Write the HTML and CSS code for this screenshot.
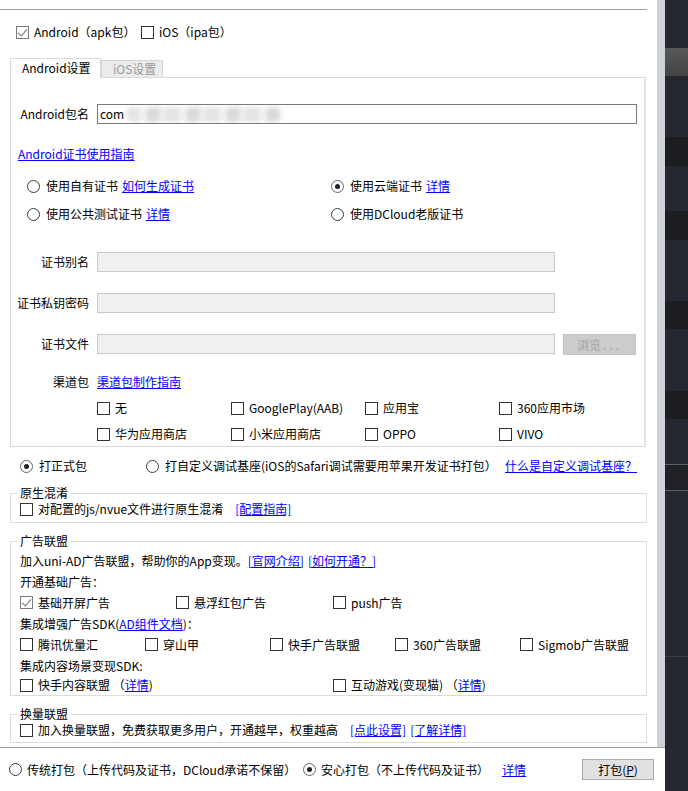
FILE: index.html
```html
<!DOCTYPE html>
<html lang="zh-CN">
  <head>
    <meta charset="UTF-8" />
    <title>发行 - 原生App-云打包</title>
    <link rel="stylesheet" href="styles.css">
  </head>
  <body>
    <div class="window">
      <div class="main">
        <div class="scroll">
          <div class="content">
            <div class="top-rule"></div>

            <!-- platforms -->
            <div class="platforms">
              <label class="opt"><span class="cb on"></span>Android（apk包）</label>
              <label class="opt"><span class="cb"></span>iOS（ipa包）</label>
            </div>

            <div class="tabs">
              <div class="tab active">Android设置</div>
              <div class="tab off">iOS设置</div>
            </div>

            <div class="panel">
              <div class="form-row">
                <span class="label">Android包名</span>
                <div class="input pkg">com<span class="blur"></span></div>
              </div>

              <a href="#" class="guide">Android证书使用指南</a>

              <div class="cert-grid">
                <label class="opt"><span class="rd"></span>使用自有证书<a href="#" class="link-after">如何生成证书</a></label>
                <label class="opt"><span class="rd on"></span>使用云端证书<a href="#" class="link-after">详情</a></label>
                <label class="opt"><span class="rd"></span>使用公共测试证书<a href="#" class="link-after">详情</a></label>
                <label class="opt"><span class="rd"></span>使用DCloud老版证书</label>
              </div>

              <div class="form-row cert first">
                <span class="label">证书别名</span>
                <div class="input"></div>
              </div>
              <div class="form-row cert">
                <span class="label">证书私钥密码</span>
                <div class="input"></div>
              </div>
              <div class="form-row cert">
                <span class="label">证书文件</span>
                <div class="input"></div>
                <div class="browse">浏览<span class="dots">...</span></div>
              </div>

              <div class="form-row channel">
                <span class="label">渠道包</span>
                <a href="#">渠道包制作指南</a>
              </div>
              <div class="channel-grid">
                <label class="opt"><span class="cb"></span>无</label>
                <label class="opt"><span class="cb"></span>GooglePlay(AAB)</label>
                <label class="opt"><span class="cb"></span>应用宝</label>
                <label class="opt"><span class="cb"></span>360应用市场</label>
                <label class="opt"><span class="cb"></span>华为应用商店</label>
                <label class="opt"><span class="cb"></span>小米应用商店</label>
                <label class="opt"><span class="cb"></span>OPPO</label>
                <label class="opt"><span class="cb"></span>VIVO</label>
              </div>
            </div>

            <div class="modes">
              <label class="opt release"><span class="rd on"></span>打正式包</label>
              <label class="opt debug"><span class="rd"></span>打自定义调试基座(iOS的Safari调试需要用苹果开发证书打包）</label>
              <a href="#">什么是自定义调试基座？</a>
            </div>

            <fieldset class="fs-mix">
              <legend>原生混淆</legend>
              <div class="row">
                <label class="opt"><span class="cb"></span>对配置的js/nvue文件进行原生混淆</label>
                <a href="#" class="bracket">[配置指南]</a>
              </div>
            </fieldset>

            <fieldset class="fs-ad">
              <legend>广告联盟</legend>
              <div class="ad-row">加入uni-AD广告联盟，帮助你的App变现。<a href="#">[官网介绍]</a><a href="#" class="next">[如何开通？]</a></div>
              <div class="ad-row">开通基础广告：</div>
              <div class="ad-row cols-base">
                <label class="opt"><span class="cb on"></span>基础开屏广告</label>
                <label class="opt"><span class="cb"></span>悬浮红包广告</label>
                <label class="opt"><span class="cb"></span>push广告</label>
              </div>
              <div class="ad-row">集成增强广告SDK(<a href="#">AD组件文档</a>)：</div>
              <div class="ad-row cols-sdk">
                <label class="opt"><span class="cb"></span>腾讯优量汇</label>
                <label class="opt"><span class="cb"></span>穿山甲</label>
                <label class="opt"><span class="cb"></span>快手广告联盟</label>
                <label class="opt"><span class="cb"></span>360广告联盟</label>
                <label class="opt"><span class="cb"></span>Sigmob广告联盟</label>
              </div>
              <div class="ad-row">集成内容场景变现SDK:</div>
              <div class="ad-row cols-content">
                <label class="opt"><span class="cb"></span>快手内容联盟 （<a href="#">详情</a>)</label>
                <label class="opt"><span class="cb"></span>互动游戏(变现猫) （<a href="#">详情</a>)</label>
              </div>
            </fieldset>

            <fieldset class="fs-swap">
              <legend>换量联盟</legend>
              <div class="row">
                <label class="opt"><span class="cb"></span>加入换量联盟，免费获取更多用户，开通越早，权重越高</label>
                <a href="#" class="bracket">[点此设置]</a><a href="#" class="next">[了解详情]</a>
              </div>
            </fieldset>
          </div>
          <div class="scrollbar"></div>
        </div>

        <!-- bottom bar -->
        <div class="footer">
          <label class="opt classic"><span class="rd"></span>传统打包（上传代码及证书，DCloud承诺不保留）</label>
          <label class="opt"><span class="rd on"></span>安心打包（不上传代码及证书）</label>
          <a href="#" class="footer-link">详情</a>
          <button class="pack-btn">打包(<u>P</u>)</button>
        </div>
      </div>
      <div class="side"></div>
    </div>
  </body>
</html>
```

FILE: styles.css
```css
* {
  box-sizing: border-box;
}

html,
body {
  margin: 0;
  padding: 0;
}

body {
  font-family: "Noto Sans CJK SC", "Noto Sans", sans-serif;
  font-size: 12px;
  line-height: 16px;
  color: #000;
  background: #fff;
}

a {
  color: #0000ff;
  text-decoration: underline;
}

.window {
  display: flex;
  width: 688px;
  height: 791px;
  overflow: hidden;
}

.main {
  width: 665px;
  display: flex;
  flex-direction: column;
}

.scroll {
  display: flex;
  height: 747px;
  overflow: hidden;
}

.content {
  width: 657px;
}

.scrollbar {
  width: 8px;
  background: #cdd1da;
}

.side {
  width: 23px;
  background: linear-gradient(
    to bottom,
    #252830 0 48px,
    #5a5858 48px,
    #444343 76px,
    #252830 76px 137px,
    #1c1d21 137px 166px,
    #252830 166px 211px,
    #1c1d21 211px 240px,
    #252830 240px 301px,
    #1c1d21 301px 329px,
    #252830 329px 391px,
    #1c1d21 391px 419px,
    #252830 419px 464px,
    #5b606b 464px 465px,
    #1f2126 465px 490px,
    #5b606b 490px 491px,
    #252830 491px 656px,
    #3a3e47 656px 657px,
    #252830 657px
  );
}

.top-rule {
  margin-top: 9px;
  width: 647px;
  border-top: 1px solid #a0a0a0;
}

/* checkbox / radio */
.opt {
  display: inline-flex;
  align-items: center;
  white-space: nowrap;
  height: 16px;
}

.cb {
  position: relative;
  flex: none;
  width: 13px;
  height: 13px;
  margin-right: 5px;
  border: 1px solid #333;
  background: #fff;
}

.cb.on {
  border-color: #7a7a7a;
}

.cb.on::after {
  content: "";
  position: absolute;
  left: 3px;
  top: 0px;
  width: 4px;
  height: 8px;
  border: solid #707070;
  border-width: 0 1px 1px 0;
  transform: rotate(40deg);
}

.rd {
  position: relative;
  flex: none;
  width: 13px;
  height: 13px;
  margin-right: 6px;
  border: 1px solid #3c3c3c;
  border-radius: 50%;
  background: #fff;
}

.rd.on {
  border-color: #666;
}

.rd.on::after {
  content: "";
  position: absolute;
  left: 3px;
  top: 3px;
  width: 5px;
  height: 5px;
  border-radius: 50%;
  background: #222;
}

.platforms {
  display: flex;
  height: 16px;
  margin-top: 14px;
  padding-left: 16px;
}

.platforms .opt:first-child {
  width: 125px;
}

/* tabs */
.tabs {
  display: flex;
  align-items: flex-end;
  height: 19px;
  margin-top: 18px;
  padding-left: 10px;
}

.tab {
  white-space: nowrap;
  padding-left: 11px;
}

.tab.active {
  position: relative;
  z-index: 1;
  width: 91px;
  height: 20px;
  margin-bottom: -1px;
  border: 1px solid #d9d9d9;
  border-bottom: none;
  background: #fff;
  line-height: 18px;
}

.tab.off {
  width: 62px;
  height: 17px;
  border: 1px solid #d4d4d4;
  border-bottom: none;
  background: #ebebeb;
  color: #9a9a9a;
  line-height: 15px;
}

.panel {
  width: 636px;
  margin-left: 10px;
  padding: 26px 0 4px 0;
  border: 1px solid #d9d9d9;
  border-right: 2px solid #e3e3e3;
}

.form-row {
  display: flex;
  align-items: center;
  height: 20px;
}

.form-row .label {
  width: 78px;
  margin-right: 8px;
  text-align: right;
  white-space: nowrap;
}

.input {
  width: 458px;
  height: 20px;
  border: 1px solid #c8c8c8;
  background: #f0f0f0;
}

.input.pkg {
  width: 540px;
  padding-left: 2px;
  border-color: #7a7a7a;
  background: #fff;
  line-height: 18px;
  overflow: hidden;
  white-space: nowrap;
}

.blur {
  display: inline-block;
  width: 156px;
  height: 15px;
  margin-left: 2px;
  vertical-align: -3px;
  border-radius: 7px;
  background: repeating-linear-gradient(
    90deg,
    #e4e4e4 0 13px,
    #f1f1f1 13px 21px,
    #dadada 21px 33px,
    #ececec 33px 40px
  );
  filter: blur(2px);
}

.guide {
  display: block;
  width: fit-content;
  margin: 22px 0 0 7px;
}

.cert-grid {
  display: grid;
  grid-template-columns: 304px auto;
  row-gap: 12px;
  margin-top: 16px;
  padding-left: 16px;
}

.link-after {
  margin-left: 4px;
}

.form-row.cert {
  margin-top: 21px;
}

.form-row.cert.first {
  margin-top: 30px;
}

.browse {
  width: 73px;
  height: 21px;
  margin-left: 8px;
  border: 1px solid #c4c4c4;
  background: #cccccc;
  color: #a3a3a3;
  text-align: center;
  line-height: 19px;
}

.browse .dots {
  letter-spacing: 3px;
  margin-left: 2px;
}

.form-row.channel {
  height: 16px;
  margin-top: 20px;
}

.channel-grid {
  display: grid;
  grid-template-columns: repeat(4, 134px);
  row-gap: 10px;
  margin: 10px 0 0 86px;
}

/* pack type */
.modes {
  display: flex;
  align-items: center;
  height: 16px;
  margin-top: 11px;
  padding-left: 20px;
}

.modes .release {
  width: 126px;
}

.modes .debug {
  width: 359px;
}

fieldset {
  width: 637px;
  min-width: 0;
  margin: 0 0 0 10px;
  padding: 0 0 4px 9px;
  border: 1px solid #dcdcdc;
}

legend {
  margin-left: -3px;
  padding: 0 3px;
  line-height: 16px;
}

fieldset .row {
  display: flex;
  align-items: center;
  height: 16px;
}

.bracket {
  margin-left: 12px;
}

.next {
  margin-left: 4px;
}

.fs-mix {
  margin-top: 11px;
  padding-bottom: 5px;
}

.fs-ad {
  margin-top: 10px;
  padding-top: 1px;
  padding-bottom: 1px;
}

.ad-row {
  display: flex;
  align-items: center;
  height: 21px;
  white-space: nowrap;
}

.ad-row:last-child {
  height: 18px;
}

.cols-base {
  display: grid;
  grid-template-columns: 156px 157px auto;
}

.cols-sdk {
  display: grid;
  grid-template-columns: repeat(4, 125px) auto;
}

.cols-content {
  display: grid;
  grid-template-columns: 313px auto;
}

.fs-swap {
  margin-top: 10px;
}

/* bottom bar */
.footer {
  display: flex;
  align-items: center;
  height: 44px;
  padding-left: 9px;
  border-top: 1px solid #a0a0a0;
}

.footer .opt .rd {
  margin-right: 5px;
}

.footer .classic {
  width: 294px;
}

.footer-link {
  margin-left: 13px;
}

.pack-btn {
  width: 72px;
  height: 21px;
  margin-left: auto;
  margin-right: 11px;
  padding: 0;
  border: 1px solid #adadad;
  background: #e1e1e1;
  font-family: inherit;
  font-size: 12px;
  color: #000;
}
```
